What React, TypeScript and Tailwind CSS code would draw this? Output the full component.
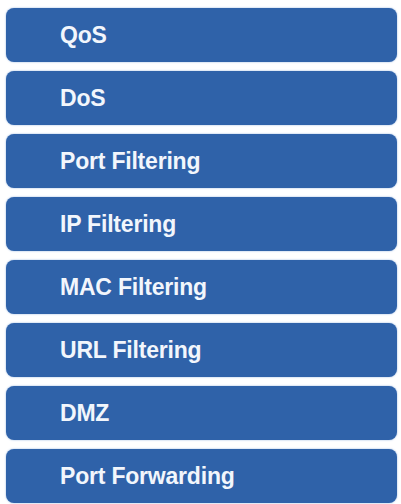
import React from "react";

const items = [
  "QoS",
  "DoS",
  "Port Filtering",
  "IP Filtering",
  "MAC Filtering",
  "URL Filtering",
  "DMZ",
  "Port Forwarding",
];

const MenuButton: React.FC<{ label: string }> = ({ label }) => (
  <button className="flex h-[54px] w-full items-center rounded-[8px] bg-[#2f62a9] pl-[54px] text-left text-[23px] font-bold tracking-[-0.2px] text-[#f2f6fc] shadow-[0_0_2px_#8fb0dc]">
    {label}
  </button>
);

export default function App() {
  return (
    <div
      className="flex min-h-[504px] w-[401px] flex-col gap-[9px] bg-white pl-[6px] pr-[4px] pt-[8px]"
      style={{ fontFamily: '"Liberation Sans", Arial, sans-serif' }}
    >
      {items.map((item) => (
        <MenuButton key={item} label={item} />
      ))}
    </div>
  );
}
